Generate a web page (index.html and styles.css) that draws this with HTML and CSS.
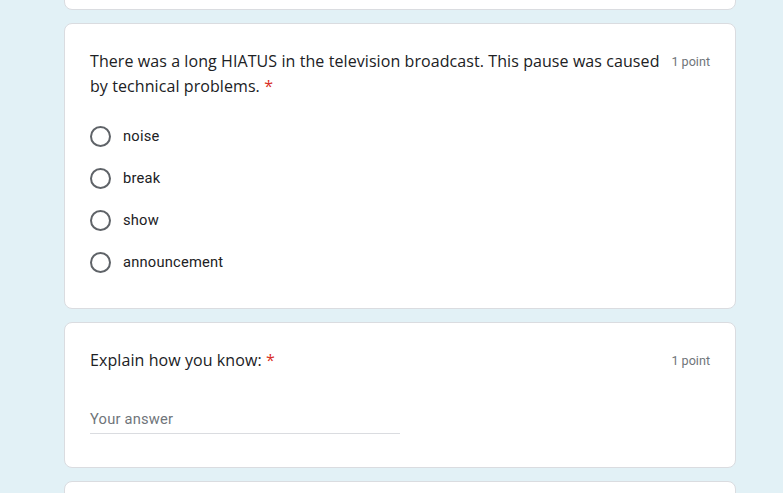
FILE: index.html
```html
<!DOCTYPE html>
<html>
<head>
<meta charset="utf-8">
<link rel="stylesheet" href="styles.css">
</head>
<body>
<div class="form">
  <div class="card card-stub"></div>

  <div class="card">
    <div class="q-head">
      <div class="q-title">There was a long HIATUS in the television broadcast. This pause was caused by technical problems. <span class="req">*</span></div>
      <div class="q-points">1 point</div>
    </div>
    <div class="options">
      <label class="option"><span class="radio"></span><span class="opt-text">noise</span></label>
      <label class="option"><span class="radio"></span><span class="opt-text">break</span></label>
      <label class="option"><span class="radio"></span><span class="opt-text">show</span></label>
      <label class="option"><span class="radio"></span><span class="opt-text">announcement</span></label>
    </div>
  </div>

  <div class="card">
    <div class="q-head">
      <div class="q-title">Explain how you know: <span class="req">*</span></div>
      <div class="q-points">1 point</div>
    </div>
    <div class="answer">
      <div class="answer-input">Your answer</div>
    </div>
  </div>

  <div class="card card-stub"></div>
</div>
</body>
</html>
```

FILE: styles.css
```css
html, body {
  margin: 0;
  padding: 0;
  background: #e2f1f6;
  height: 100%;
  overflow: hidden;
}

.form {
  width: 672px;
  margin: -40px 0 0 64px;
  display: flex;
  flex-direction: column;
  gap: 13px;
}

.card {
  background: #ffffff;
  border: 1px solid #dadce0;
  border-radius: 8px;
  padding: 25px;
  box-sizing: border-box;
}

.card-stub {
  height: 50px;
  padding: 0;
  flex: none;
}

.q-head {
  display: flex;
  align-items: flex-start;
  gap: 6px;
}

.q-title {
  flex: 1;
  font-family: "Open Sans", "Liberation Sans", sans-serif;
  font-size: 16px;
  line-height: 25px;
  color: #202124;
  letter-spacing: 0.08px;
}

.req {
  color: #d93025;
}

.q-points {
  font-family: Roboto, "Liberation Sans", sans-serif;
  font-size: 12.6px;
  line-height: 25px;
  color: #70757a;
  white-space: nowrap;
}

.options {
  display: flex;
  flex-direction: column;
  margin-top: 16px;
}

.option {
  display: flex;
  align-items: center;
  height: 42px;
}

.radio {
  width: 21px;
  height: 21px;
  box-sizing: border-box;
  border: 2px solid #5f6368;
  border-radius: 50%;
  margin-right: 12px;
  flex: none;
}

.opt-text {
  font-family: Roboto, "Liberation Sans", sans-serif;
  font-size: 14.7px;
  color: #202124;
  letter-spacing: 0.21px;
}

.answer {
  margin-top: 36px;
  padding-bottom: 8px;
}

.answer-input {
  width: 50%;
  font-family: Roboto, "Liberation Sans", sans-serif;
  font-size: 14.7px;
  line-height: 20px;
  color: #70757a;
  letter-spacing: 0.21px;
  padding-bottom: 4px;
  border-bottom: 1px solid #dadce0;
}
```
